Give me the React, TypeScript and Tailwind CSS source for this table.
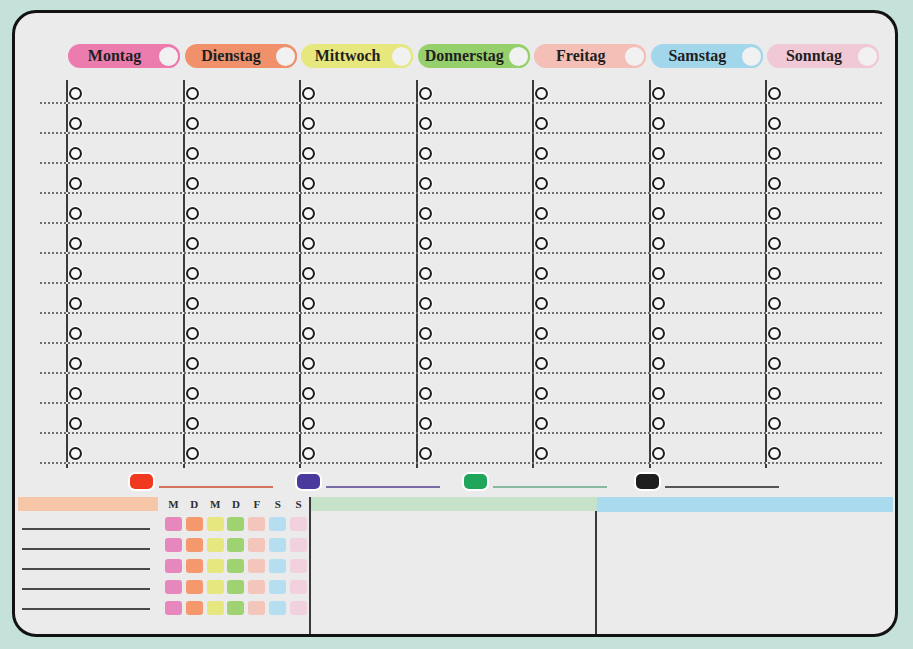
import React from 'react';

interface Day {
    name: string;
    pill: string;
    ring: string;
}

const days: Day[] = [
    { name: 'Montag', pill: 'bg-[#ec7cae]', ring: 'border-[#ec7cae]' },
    { name: 'Dienstag', pill: 'bg-[#f0916c]', ring: 'border-[#f0916c]' },
    { name: 'Mittwoch', pill: 'bg-[#e6e77c]', ring: 'border-[#e6e77c]' },
    { name: 'Donnerstag', pill: 'bg-[#96d06c]', ring: 'border-[#96d06c]' },
    { name: 'Freitag', pill: 'bg-[#f3bfb6]', ring: 'border-[#f3bfb6]' },
    { name: 'Samstag', pill: 'bg-[#a2d6eb]', ring: 'border-[#a2d6eb]' },
    { name: 'Sonntag', pill: 'bg-[#f0c8d6]', ring: 'border-[#f0c8d6]' },
];

// colour of each little box column in the habit grid (M D M D F S S)
const boxColors = [
    'bg-[#e688be]',
    'bg-[#f6986e]',
    'bg-[#e7e77f]',
    'bg-[#9fd372]',
    'bg-[#f4c5bb]',
    'bg-[#b5def0]',
    'bg-[#f1d1de]',
];

const letters = ['M', 'D', 'M', 'D', 'F', 'S', 'S'];

const markers = [
    { chip: 'bg-[#f0391f]', line: 'bg-[#d4735f]', gap: '' },
    { chip: 'bg-[#4a3a9e]', line: 'bg-[#7b6ca8]', gap: 'ml-[24px]' },
    { chip: 'bg-[#1fa65a]', line: 'bg-[#86bba0]', gap: 'ml-[24px]' },
    { chip: 'bg-[#1e1e1e]', line: 'bg-[#555555]', gap: 'ml-[29px]' },
];

const ROWS = 13;

const DayPill: React.FC<{ day: Day }> = ({ day }) => (
    <div className={`ml-[2px] w-[112px] h-[24px] rounded-full flex items-center ${day.pill}`}>
        <span className="flex-1 text-center pl-[4px] text-[16px] font-bold leading-none text-[#1f1f1f]">
            {day.name}
        </span>
        <span className={`shrink-0 w-[23px] h-[23px] rounded-full border-[2px] bg-[#f1f1f1] ${day.ring}`} />
    </div>
);

const PlannerRow: React.FC<{ first: boolean }> = ({ first }) => (
    <div
        className={`flex border-b-[2px] border-dotted border-[#6f6f6f] ${
            first ? 'h-[24px]' : 'h-[30px]'
        }`}
    >
        <div className="w-[26px]" />
        <div className="flex-1 grid grid-cols-7">
            {days.map((d) => (
                <div key={d.name} className="border-l-[2px] border-[#3b3b3b] flex items-end pb-[2px]">
                    <span className="ml-[1px] w-[13px] h-[13px] rounded-full border-[2px] border-[#1e1e1e] bg-[#f7f7f7] shadow-[0_0_0_1px_#ffffff]" />
                </div>
            ))}
        </div>
    </div>
);

export default function App() {
    return (
        <div className="w-[913px] h-[649px] bg-[#c4e2da] pt-[10px] pl-[12px] pr-[15px] pb-[12px] font-['Liberation_Serif','Times_New_Roman',serif]">
            <div className="h-full border-[3px] border-[#121212] rounded-[24px] bg-[#ebebeb] overflow-hidden flex flex-col">
                {/* day headers */}
                <div className="mt-[31px] pl-[51px] pr-[13px]">
                    <div className="grid grid-cols-7">
                        {days.map((d) => (
                            <DayPill key={d.name} day={d} />
                        ))}
                    </div>
                </div>

                {/* week grid */}
                <div className="mt-[12px] pl-[25px] pr-[13px]">
                    {Array.from({ length: ROWS }).map((_, i) => (
                        <PlannerRow key={i} first={i === 0} />
                    ))}
                    <div className="flex h-[4px]">
                        <div className="w-[26px]" />
                        <div className="flex-1 grid grid-cols-7">
                            {days.map((d) => (
                                <div key={d.name} className="border-l-[2px] border-[#3b3b3b]" />
                            ))}
                        </div>
                    </div>
                </div>

                {/* marker colour legend */}
                <div className="mt-[7px] pl-[115px] flex items-end h-[14px]">
                    {markers.map((m, i) => (
                        <div key={i} className={`flex items-end ${m.gap}`}>
                            <span className={`w-[23px] h-[15px] rounded-[5px] ${m.chip} shadow-[0_0_0_2px_#ffffff]`} />
                            <span className={`ml-[6px] mb-[1px] w-[114px] h-[2px] ${m.line}`} />
                        </div>
                    ))}
                </div>

                {/* bottom panels */}
                <div className="mt-[8px] flex-1 flex">
                    <div className="w-[148px] flex flex-col">
                        <div className="ml-[3px] w-[140px] h-[14px] bg-[#f7c5a8]" />
                        <div className="mt-[17px] ml-[7px] flex flex-col gap-[18px]">
                            {[0, 1, 2, 3, 4].map((i) => (
                                <div key={i} className="w-[128px] h-[2px] bg-[#4a4a4a]" />
                            ))}
                        </div>
                    </div>

                    <div className="w-[146px]">
                        <div className="grid grid-cols-7 h-[14px]">
                            {letters.map((l, i) => (
                                <span key={i} className="text-center text-[11px] font-bold leading-[14px] text-[#2e2e2e]">
                                    {l}
                                </span>
                            ))}
                        </div>
                        <div className="mt-[6px] grid grid-cols-7 gap-y-[7px]">
                            {Array.from({ length: 35 }).map((_, i) => (
                                <div key={i} className="flex justify-center">
                                    <span className={`w-[17px] h-[14px] rounded-[3px] ${boxColors[i % 7]}`} />
                                </div>
                            ))}
                        </div>
                    </div>

                    <div className="w-[2px] bg-[#3a3a3a]" />

                    <div className="w-[286px] flex flex-col">
                        <div className="h-[14px] bg-[#c6e3c9]" />
                        <div className="flex-1 border-r-[2px] border-[#3a3a3a]" />
                    </div>

                    <div className="flex-1 flex flex-col pr-[2px]">
                        <div className="h-[15px] bg-[#a9daed]" />
                        <div className="flex-1" />
                    </div>
                </div>
            </div>
        </div>
    );
}
